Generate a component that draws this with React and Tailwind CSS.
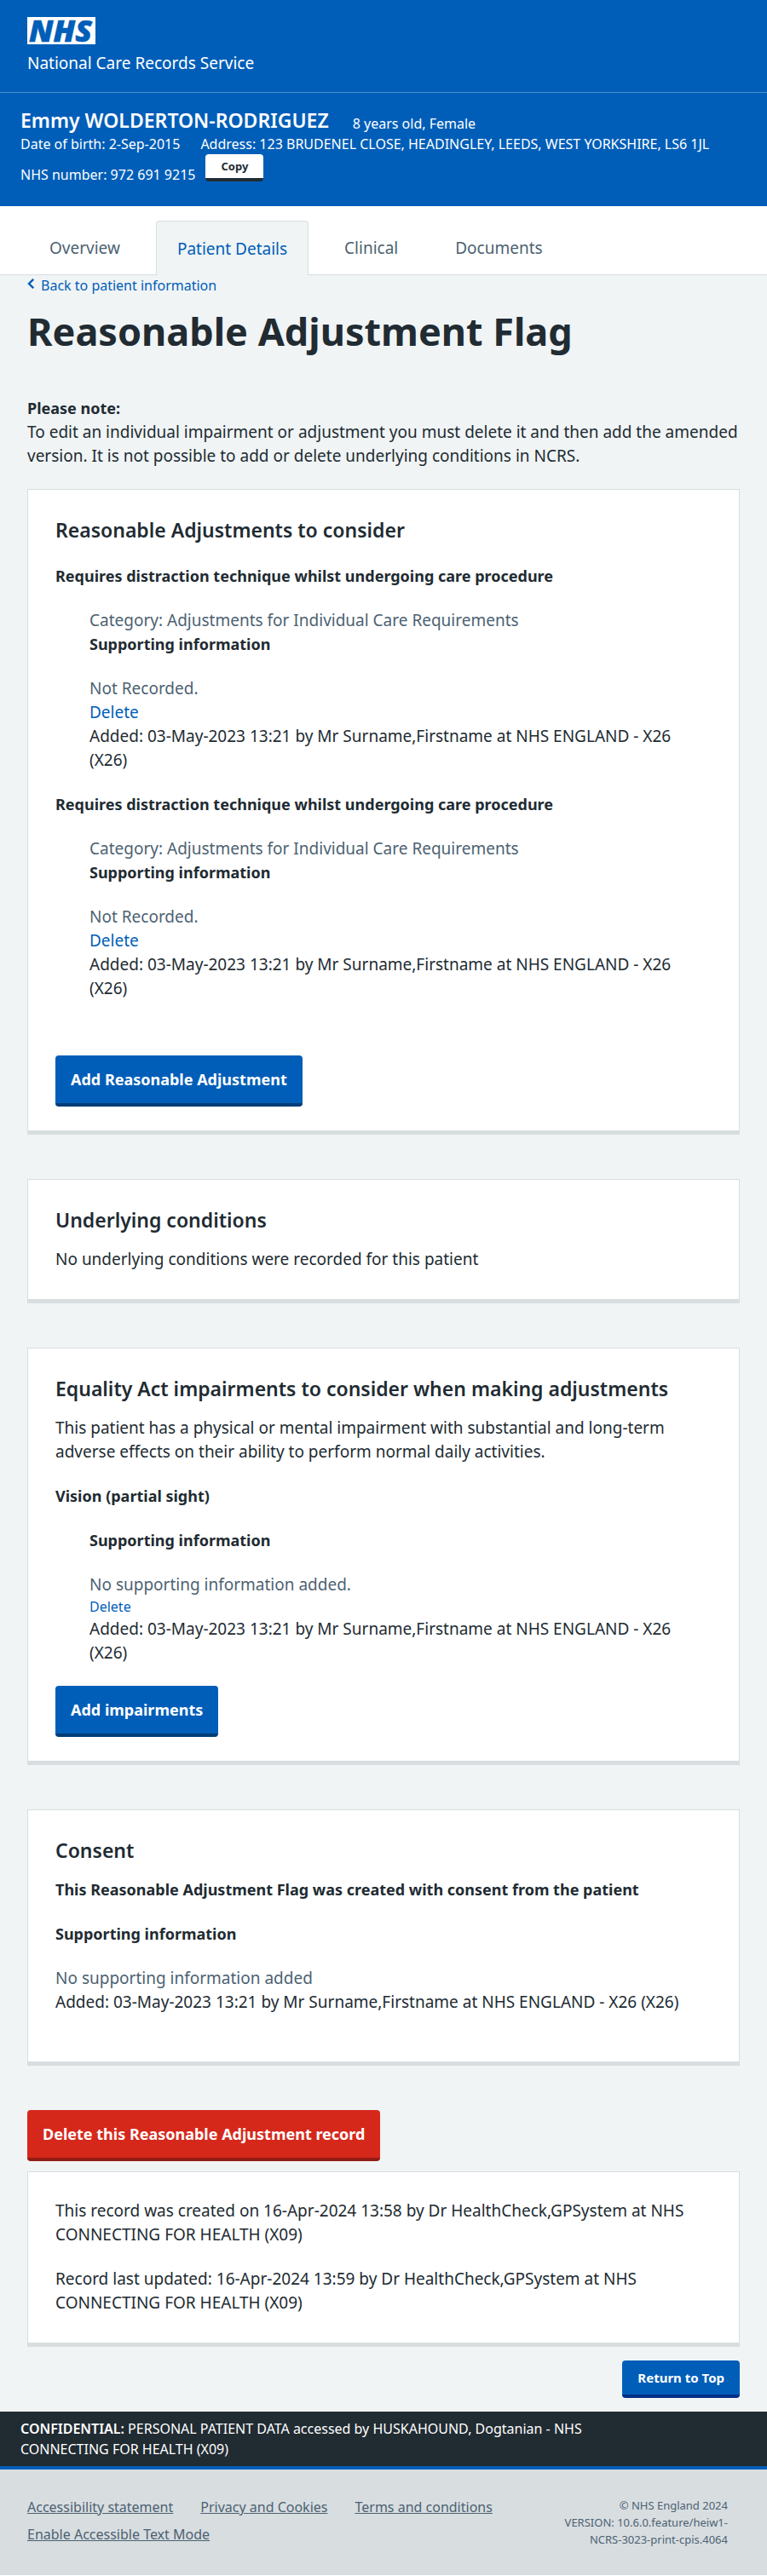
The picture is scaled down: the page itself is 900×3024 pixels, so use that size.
import React from "react";

const ADDED = "Added: 03-May-2023 13:21 by Mr Surname,Firstname at NHS ENGLAND - X26 (X26)";

function Card({ className = "", children }) {
  return (
    <section className={`border border-b-[5px] border-[#d8dde0] bg-white px-8 pt-[31px] ${className}`}>
      {children}
    </section>
  );
}

function CardHeading({ children }) {
  return <h2 className="text-[23px] leading-8 font-semibold">{children}</h2>;
}

function Strong({ as: Tag = "p", className = "", children }) {
  return <Tag className={`text-lg leading-7 font-bold ${className}`}>{children}</Tag>;
}

function PrimaryButton({ className = "", children }) {
  return (
    <button
      type="button"
      className={`block h-15 rounded border-b-4 px-[18px] text-lg leading-7 font-bold text-white ${className}`}
    >
      {children}
    </button>
  );
}

function Adjustment() {
  return (
    <article className="flex flex-col gap-6">
      <Strong as="h3">Requires distraction technique whilst undergoing care procedure</Strong>
      <div className="pl-10">
        <p className="text-[#4c6272]">Category: Adjustments for Individual Care Requirements</p>
        <Strong as="h4">Supporting information</Strong>
        <p className="mt-6 text-[#4c6272]">Not Recorded.</p>
        <a href="#delete" className="block text-[#005eb8]">Delete</a>
        <p>{ADDED}</p>
      </div>
    </article>
  );
}

const tabs = ["Overview", "Patient Details", "Clinical", "Documents"];

function Tabs() {
  return (
    <nav aria-label="Patient record" className="border-b border-[#d8dde0] bg-white px-[33px] pt-[17px]">
      <ul className="flex gap-[17px]">
        {tabs.map((tab) => (
          <li key={tab} className="-mb-px">
            <a
              href={`#${tab.toLowerCase().replace(" ", "-")}`}
              aria-current={tab === "Patient Details" ? "page" : undefined}
              className={
                tab === "Patient Details"
                  ? "flex h-16 items-center rounded-t border border-b-0 border-[#d8dde0] bg-[#f0f4f5] px-6 text-[#005eb8]"
                  : "flex h-16 items-center border border-transparent px-6 text-[#4c6272]"
              }
            >
              {tab}
            </a>
          </li>
        ))}
      </ul>
    </nav>
  );
}

export default function App() {
  return (
    <div
      id="top"
      className="bg-[#f0f4f5] font-['Noto_Sans','Open_Sans',sans-serif] text-[19px] leading-7 text-[#212b32]"
    >
      <header className="bg-[#005eb8] text-white">
        <div className="border-b border-[#4c8ecd] px-8 pt-5 pb-5">
          <a href="#home" aria-label="NHS home" className="block h-8 w-20 bg-white">
            <svg viewBox="0 0 80 32" className="h-8 w-20 overflow-visible" role="img" aria-label="NHS">
              <text
                x="39"
                y="29"
                textAnchor="middle"
                fill="#005eb8"
                stroke="#005eb8"
                strokeWidth="0.6"
                fontFamily="'Open Sans','Noto Sans',sans-serif"
                fontStyle="italic"
                fontWeight="800"
                fontSize="36"
              >
                NHS
              </text>
            </svg>
          </a>
          <p className="mt-2">National Care Records Service</p>
        </div>
        <div className="px-6 pt-4 pb-[25px] text-base leading-6">
          <div className="flex items-end gap-7">
            <h2 className="text-[23px] leading-8 font-semibold">Emmy WOLDERTON-RODRIGUEZ</h2>
            <p>8 years old, Female</p>
          </div>
          <div className="flex flex-wrap gap-x-6">
            <p>Date of birth: 2-Sep-2015</p>
            <p>Address: 123 BRUDENEL CLOSE, HEADINGLEY, LEEDS, WEST YORKSHIRE, LS6 1JL</p>
          </div>
          <div className="flex items-end gap-3">
            <p>NHS number: 972 691 9215</p>
            <button
              type="button"
              className="mb-1 h-8 rounded border-b-4 border-[#212b32] bg-white px-[18px] text-[13px] leading-6 font-bold text-[#212b32]"
            >
              Copy
            </button>
          </div>
        </div>
      </header>

      <Tabs />

      <main className="px-8 pb-4">
        <a href="#back" className="flex items-center gap-2 text-base leading-6 text-[#005eb8]">
          <svg viewBox="0 0 8 12" className="-mt-1 h-3 w-2" fill="none" stroke="currentColor" strokeWidth="2.4" aria-hidden="true">
            <path d="M7.2 0.8 2 6l5.200 5.200" />
          </svg>
          Back to patient information
        </a>
        <h1 className="mt-[14px] text-[45px] leading-14 font-bold">
          Reasonable Adjustment Flag
        </h1>
        <Strong className="mt-12">Please note:</Strong>
        <p>
          To edit an individual impairment or adjustment you must delete it and then add the amended version. It is
          not possible to add or delete underlying conditions in NCRS.
        </p>

        <div className="mt-[25px] flex flex-col gap-13">
          <Card className="pb-7">
            <CardHeading>Reasonable Adjustments to consider</CardHeading>
            <div className="mt-6 flex flex-col gap-6">
              <Adjustment />
              <Adjustment />
            </div>
            <PrimaryButton className="mt-[65px] border-[#003d78] bg-[#005eb8]">Add Reasonable Adjustment</PrimaryButton>
          </Card>

          <Card className="pb-[33px]">
            <CardHeading>Underlying conditions</CardHeading>
            <p className="mt-4">No underlying conditions were recorded for this patient</p>
          </Card>

          <Card className="pb-7">
            <CardHeading>Equality Act impairments to consider when making adjustments</CardHeading>
            <p className="mt-4">
              This patient has a physical or mental impairment with substantial and long-term adverse effects on their
              ability to perform normal daily activities.
            </p>
            <Strong as="h3" className="mt-6">Vision (partial sight)</Strong>
            <div className="mt-6 pl-10">
              <Strong as="h4">Supporting information</Strong>
              <p className="mt-6 text-[#4c6272]">No supporting information added.</p>
              <a href="#delete-impairment" className="block text-base leading-6 text-[#005eb8]">Delete</a>
              <p>{ADDED}</p>
            </div>
            <PrimaryButton className="mt-[25px] border-[#003d78] bg-[#005eb8]">Add impairments</PrimaryButton>
          </Card>

          <Card className="pb-14">
            <CardHeading>Consent</CardHeading>
            <Strong className="mt-4">This Reasonable Adjustment Flag was created with consent from the patient</Strong>
            <Strong as="h3" className="mt-6">Supporting information</Strong>
            <p className="mt-6 text-[#4c6272]">No supporting information added</p>
            <p>{ADDED}</p>
          </Card>

          <div>
            <PrimaryButton className="border-[#921c13] bg-[#d5281b]">Delete this Reasonable Adjustment record</PrimaryButton>
            <Card className="mt-3 pb-[33px]">
              <p>This record was created on 16-Apr-2024 13:58 by Dr HealthCheck,GPSystem at NHS CONNECTING FOR HEALTH (X09)</p>
              <p className="mt-6">Record last updated: 16-Apr-2024 13:59 by Dr HealthCheck,GPSystem at NHS CONNECTING FOR HEALTH (X09)</p>
            </Card>
            <div className="mt-4 flex justify-end">
              <a
                href="#top"
                className="flex h-11 items-center rounded border-b-4 border-[#003087] bg-[#005eb8] px-[18px] text-[15px] leading-6 font-bold text-white"
              >
                Return to Top
              </a>
            </div>
          </div>
        </div>
      </main>

      <div className="bg-[#212b32] px-6 py-2 text-base leading-6 text-white">
        <p className="max-w-[700px]">
          <strong className="font-semibold">CONFIDENTIAL:</strong> PERSONAL PATIENT DATA accessed by HUSKAHOUND,
          Dogtanian - NHS CONNECTING FOR HEALTH (X09)
        </p>
      </div>

      <footer className="flex items-start justify-between gap-8 border-t-4 border-[#005eb8] bg-[#d8dde0] px-8 pt-8 pb-8 text-[#4c6272]">
        <ul className="flex flex-1 flex-wrap gap-x-8 gap-y-2 text-base leading-6 underline">
          <li><a href="#accessibility">Accessibility statement</a></li>
          <li><a href="#privacy">Privacy and Cookies</a></li>
          <li><a href="#terms">Terms and conditions</a></li>
          <li><a href="#text-mode">Enable Accessible Text Mode</a></li>
        </ul>
        <p className="mr-[14px] w-50 text-right text-[13px] leading-5">
          © NHS England 2024
          <br />
          VERSION: 10.6.0.feature/heiw1-
          <br />
          NCRS-3023-print-cpis.4064
        </p>
      </footer>
    </div>
  );
}
